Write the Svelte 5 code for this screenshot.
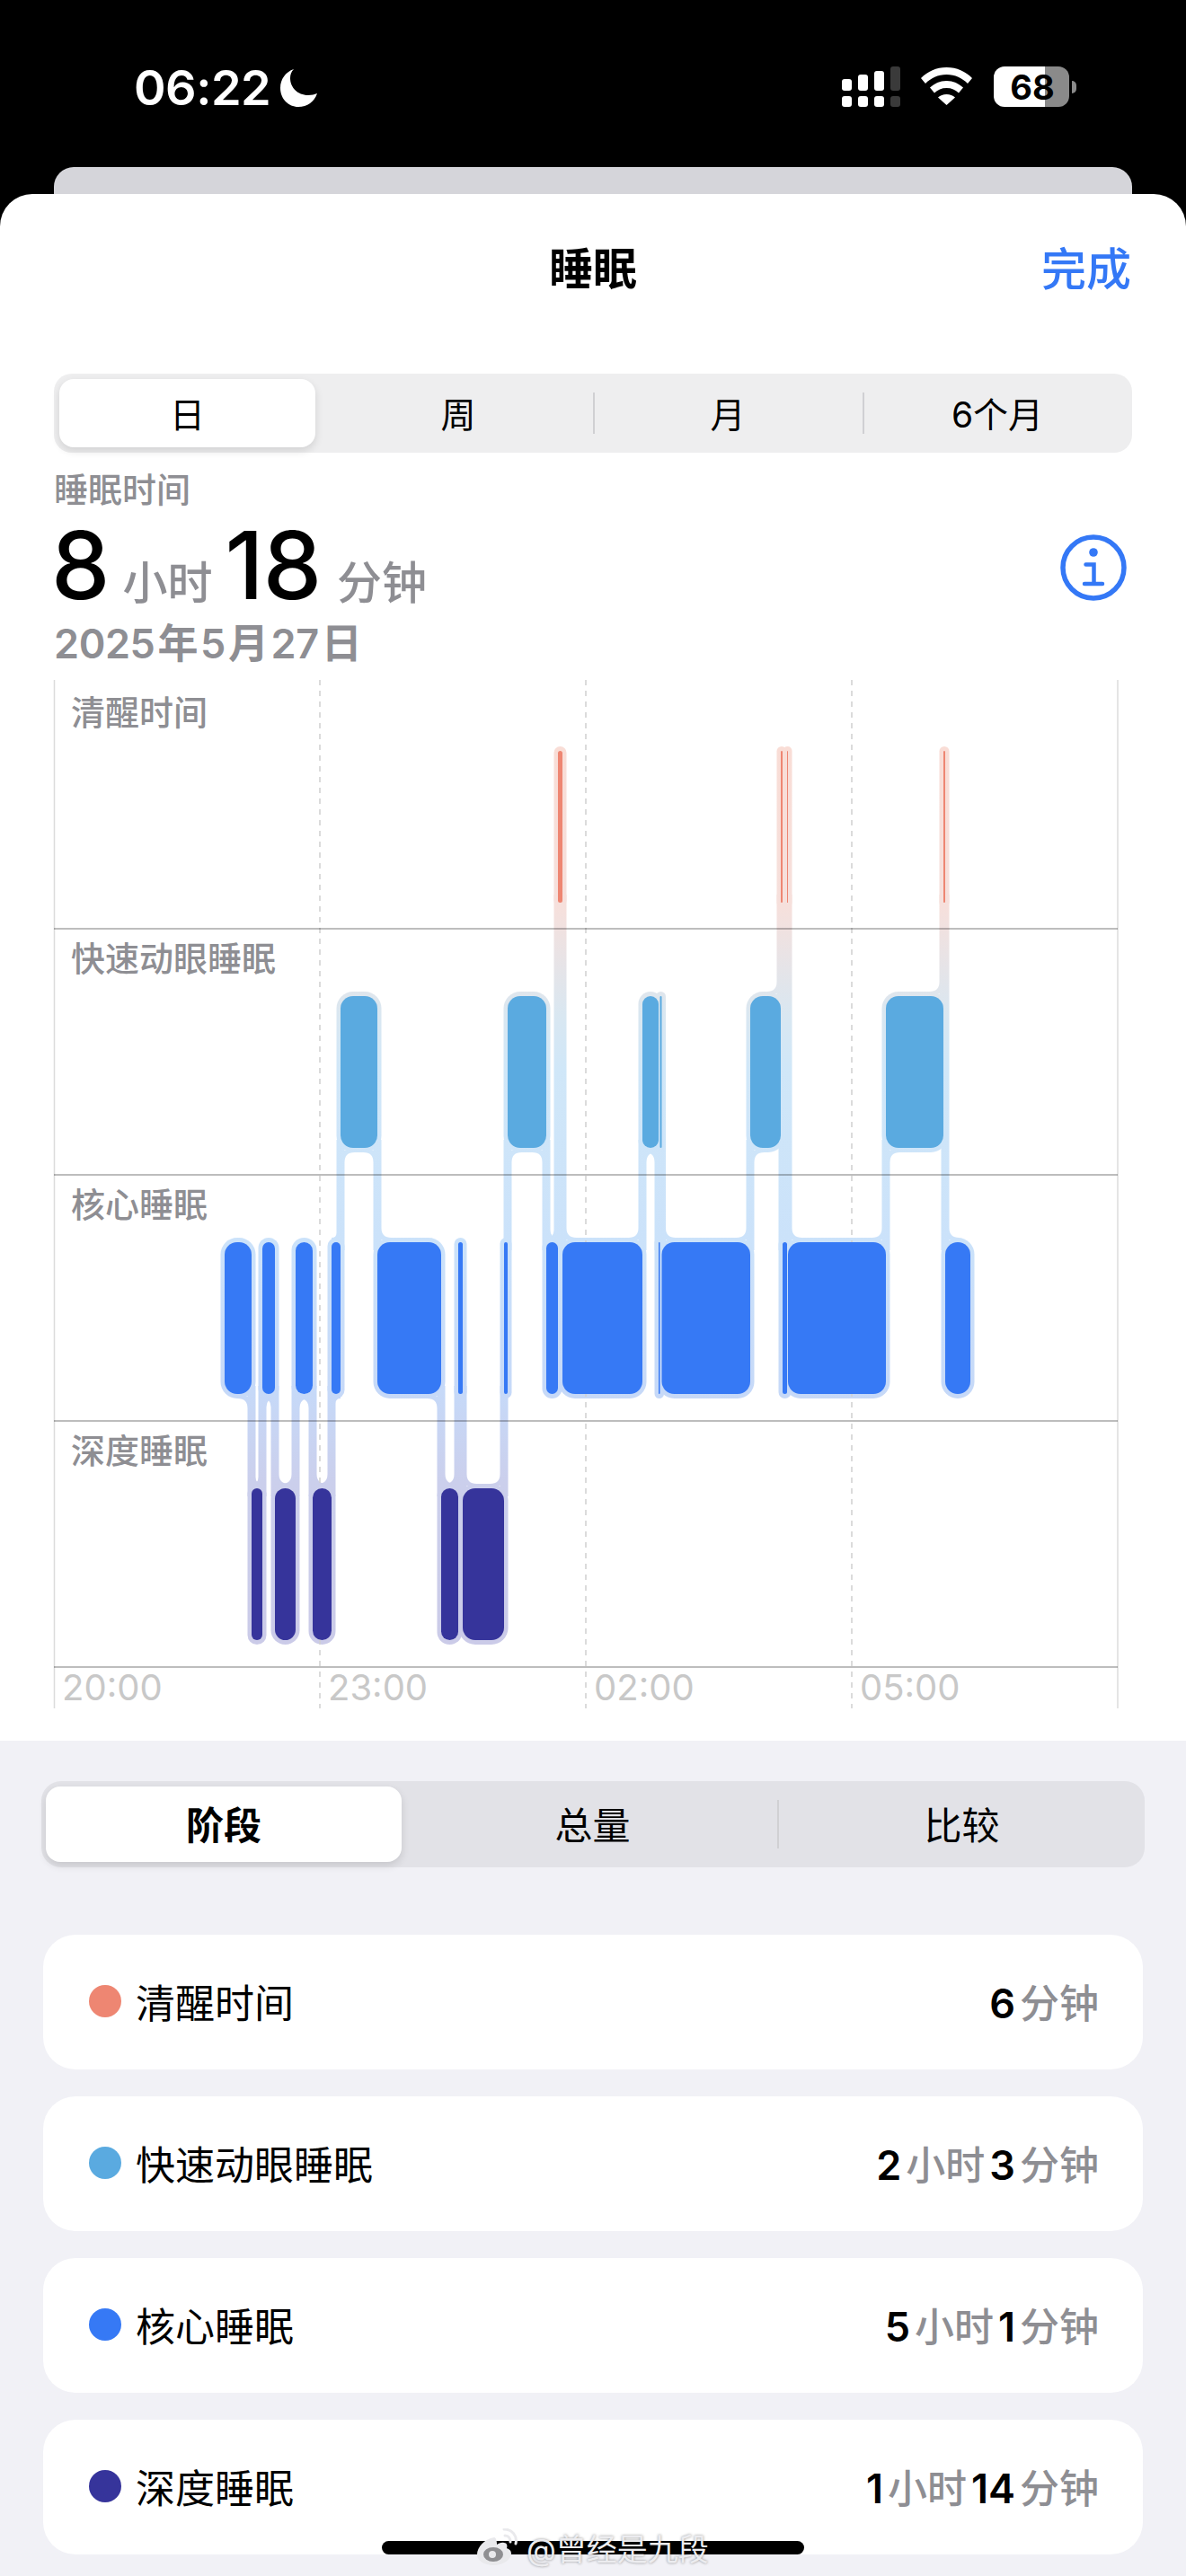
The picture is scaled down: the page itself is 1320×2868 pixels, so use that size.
<script>
	// Timeline of the night, in chart pixels. Neighbouring segments touch.
	const ROWS = { awake: 836, rem: 1109, core: 1383, deep: 1657 }
	const BAR_H = 169
	const FILL = { awake: "#ee8672", rem: "#5aaae0", core: "#3679f5", deep: "#36349b" }

	const segments = [
		["core", 250, 280], ["deep", 280, 292], ["core", 292, 306], ["deep", 306, 329],
		["core", 329, 348], ["deep", 348, 369], ["core", 369, 379], ["rem", 379, 420],
		["core", 420, 491], ["deep", 491, 510], ["core", 510, 515], ["deep", 515, 561],
		["core", 561, 565], ["rem", 565, 608], ["core", 608, 621], ["awake", 621, 626],
		["core", 626, 715], ["rem", 715, 733], ["core", 733, 734.5], ["rem", 734.5, 736.5],
		["core", 736.5, 835], ["rem", 835, 869], ["awake", 869, 871], ["core", 871, 876],
		["awake", 876, 877], ["core", 877, 986], ["rem", 986, 1050], ["awake", 1050, 1052],
		["core", 1052, 1080],
	].map(([stage, x0, x1]) => ({ stage, x: x0, w: x1 - x0, y: ROWS[stage] }))

	const HALO_X = 4.5
	const HALO_Y = 5

	function radius(w) {
		return Math.min(14, w / 2)
	}

	// Connector between two neighbouring segments, with the concave fillets
	function connector(a, b) {
		const x = a.x + a.w
		const up = a.y < b.y ? a : b
		const down = a.y < b.y ? b : a
		const dir = up === a ? -1 : 1
		const yu = up.y + BAR_H + HALO_Y
		const yl = down.y - HALO_Y
		const near = x + dir * HALO_X
		const far = x - dir * HALO_X
		const ru = Math.min(11, Math.max(0, up.w - HALO_X))
		const rl = Math.min(11, Math.max(0, down.w - HALO_X))
		return [
			`M${near + dir * ru} ${yu - 2}`,
			`L${near + dir * ru} ${yu}`,
			`Q${near} ${yu} ${near} ${yu + ru}`,
			`L${near} ${yl + 14}`,
			`L${far} ${yl + 14}`,
			`L${far} ${yl + 2}`,
			`L${far - dir * rl} ${yl + 2}`,
			`L${far - dir * rl} ${yl}`,
			`Q${far} ${yl} ${far} ${yl - rl}`,
			`L${far} ${yu - 14}`,
			`L${near} ${yu - 14}`,
			`L${near} ${yu - 2}`,
			"Z",
		].join("")
	}

	const links = segments.slice(1).map((seg, i) => connector(segments[i], seg))

	const gridY = [1034, 1308, 1582, 1856]
	const gridX = [356, 652, 948]
	const rowLabels = [
		["清醒时间", 807],
		["快速动眼睡眠", 1081],
		["核心睡眠", 1355],
		["深度睡眠", 1629],
	]
	const hours = [["20:00", 69], ["23:00", 365], ["02:00", 661], ["05:00", 957]]

	const ranges = ["日", "周", "月", "6个月"]
	const modes = ["阶段", "总量", "比较"]

	const stages = [
		{ name: "清醒时间", color: FILL.awake, value: [["6", "分钟"]] },
		{ name: "快速动眼睡眠", color: FILL.rem, value: [["2", "小时"], ["3", "分钟"]] },
		{ name: "核心睡眠", color: FILL.core, value: [["5", "小时"], ["1", "分钟"]] },
		{ name: "深度睡眠", color: FILL.deep, value: [["1", "小时"], ["14", "分钟"]] },
	]
</script>

<div class="page">
	<header class="status">
		<div class="clock">
			<span>06:22</span>
			<svg class="moon" viewBox="0 0 41 42" aria-hidden="true">
				<path d="M15 0C6 3 0 11 0 21c0 12 9 21 20 21 10 0 18-6 21-15-3 1-6 2-10 2C19 29 11 20 11 10c0-4 1-7 4-10z" fill="#fff" />
			</svg>
		</div>
		<div class="status-icons">
			<svg class="signal" viewBox="0 0 65 45" aria-hidden="true">
				<g fill="#fff">
					<rect x="0" y="14" width="11" height="13" rx="3" />
					<rect x="18" y="9" width="11" height="18" rx="3" />
					<rect x="36" y="5" width="11" height="22" rx="3" />
					<rect x="0" y="33" width="11" height="12" rx="3" />
					<rect x="18" y="33" width="11" height="12" rx="3" />
					<rect x="36" y="33" width="11" height="12" rx="3" />
				</g>
				<g fill="#3a3a3a">
					<rect x="54" y="0" width="11" height="27" rx="3" />
					<rect x="54" y="33" width="11" height="12" rx="3" />
				</g>
			</svg>
			<svg class="wifi" viewBox="0 0 57 42" aria-hidden="true">
				<path d="M28.500 0C17 0 7.500 4.500 0 12l5 6c6-6 14-10 23.500-10S46 12 52 18l5-6C49.500 4.500 40 0 28.500 0z" fill="#fff" />
				<path d="M28.500 15c-7.500 0-13.500 3-18.500 7.500l5 6c3.500-3.500 8-5.500 13.500-5.500S38.500 25 42 28.500l5-6C42 18 36 15 28.500 15z" fill="#fff" />
				<path d="M28.500 30c-4 0-7 1.500-9.500 3.500L28.500 42 38 33.500C35.500 31.500 32.500 30 28.500 30z" fill="#fff" />
			</svg>
			<div class="battery">
				<div class="battery-body"><span>68</span></div>
				<div class="battery-cap"></div>
			</div>
		</div>
	</header>

	<div class="back-card"></div>

	<main class="sheet">
		<div class="nav">
			<h1>睡眠</h1>
			<span class="done">完成</span>
		</div>

		<div class="segmented ranges">
			{#each ranges as range, i}
				<div class="seg-item" class:active={i === 0} class:divided={i > 1}>{range}</div>
			{/each}
		</div>

		<section class="summary">
			<div class="summary-label">睡眠时间</div>
			<div class="summary-value">
				<b class="first">8</b><span class="unit">小时</span><b>18</b><span class="unit minutes">分钟</span>
				<svg class="info" viewBox="0 0 74 74" aria-hidden="true">
					<circle cx="37" cy="37" r="34" fill="none" stroke="#3478f6" stroke-width="5.500" />
					<circle cx="37" cy="20" r="4.800" fill="#3478f6" />
					<path d="M28.500 33.500H37.500V55M27 55H47" fill="none" stroke="#3478f6" stroke-width="4.500" stroke-linecap="round" />
				</svg>
			</div>
			<div class="summary-date">2025<i>年</i>5<i>月</i>27<i>日</i></div>
		</section>

		<svg class="chart" viewBox="0 757 1320 1145" role="img" aria-label="睡眠阶段图表">
			<defs>
				<linearGradient id="halo" gradientUnits="userSpaceOnUse" x1="0" y1="830" x2="0" y2="1830">
					<stop offset="0" stop-color="#f9ddd6" />
					<stop offset="0.18" stop-color="#f6e0dc" />
					<stop offset="0.3" stop-color="#d9e7f1" />
					<stop offset="0.36" stop-color="#d0e7f8" />
					<stop offset="0.55" stop-color="#cbe2fa" />
					<stop offset="0.72" stop-color="#c6d9f8" />
					<stop offset="0.82" stop-color="#cbcfec" />
					<stop offset="1" stop-color="#cbcbe8" />
				</linearGradient>
			</defs>

			<line class="edge" x1="60.500" y1="757" x2="60.500" y2="1902" />
			<line class="edge" x1="1244" y1="757" x2="1244" y2="1902" />

			{#each rowLabels as [label, y]}
				<text class="row-label" x="79" {y}>{label}</text>
			{/each}

			{#each links as d}
				<path {d} fill="url(#halo)" />
			{/each}
			{#each segments as seg}
				<rect
					x={seg.x - HALO_X}
					y={seg.y - HALO_Y}
					width={seg.w + HALO_X * 2}
					height={BAR_H + HALO_Y * 2}
					rx={radius(seg.w) + HALO_X}
					fill="url(#halo)"
				/>
			{/each}

			{#each gridX as x}
				<line class="dash" x1={x} y1="757" x2={x} y2="1902" />
			{/each}
			{#each gridY as y}
				<line class="rule" x1="60" y1={y} x2="1244" y2={y} />
			{/each}

			{#each segments as seg}
				<rect x={seg.x} y={seg.y} width={seg.w} height={BAR_H} rx={radius(seg.w)} fill={FILL[seg.stage]} />
			{/each}

			{#each hours as [hour, x]}
				<text class="hour" {x} y="1893">{hour}</text>
			{/each}
		</svg>
	</main>

	<section class="lower">
		<div class="segmented modes">
			{#each modes as mode, i}
				<div class="seg-item" class:active={i === 0} class:divided={i > 1}>{mode}</div>
			{/each}
		</div>

		<div class="stage-list">
			{#each stages as stage}
				<div class="stage-card">
					<span class="dot" style="background: {stage.color}"></span>
					<span class="stage-name">{stage.name}</span>
					<span class="stage-value">
						{#each stage.value as [num, unit]}
							<b>{num}</b><span>{unit}</span>
						{/each}
					</span>
				</div>
			{/each}
		</div>
	</section>

	<div class="home-bar"></div>

	<div class="watermark">
		<svg class="weibo" viewBox="0 0 48 42" aria-hidden="true">
			<path d="M20 10C9 12 1 21 1 29c0 7 8 12 18 12 12 0 20-7 20-13 0-4-3-5-5-6 1-3 0-6-3-6-3-1-6 1-8 2 0-4-1-8-3-8z" fill="#e9e9ec" />
			<ellipse cx="19" cy="29" rx="11" ry="8" fill="#8f8f92" />
			<circle cx="18" cy="29" r="4" fill="#e9e9ec" />
			<path d="M31 1c9 0 15 7 13 16M32 8c4 0 6 3 6 7" fill="none" stroke="#e9e9ec" stroke-width="3" stroke-linecap="round" />
		</svg>
		<span>@曾经是九段</span>
	</div>
</div>

<style>
	:global(body) {
		background: #000;
	}

	.page {
		position: relative;
		width: 1320px;
		height: 2868px;
		overflow: hidden;
		background: #000;
		font-family: Inter, "Noto Sans CJK SC", sans-serif;
	}

	.status {
		height: 186px;
		display: flex;
		justify-content: space-between;
		align-items: flex-start;
		padding: 74px 122px 0 149px;
		box-sizing: border-box;
		color: #fff;
	}

	.clock {
		display: flex;
		align-items: center;
		gap: 11px;
		font-size: 54px;
		font-weight: 600;
		line-height: 48px;
		letter-spacing: -0.5px;
	}

	.moon {
		width: 41px;
		height: 42px;
	}

	.status-icons {
		display: flex;
		align-items: flex-start;
		gap: 23px;
	}

	.signal {
		width: 65px;
		height: 45px;
	}

	.wifi {
		width: 57px;
		height: 42px;
		margin-top: 1px;
		margin-right: 1px;
	}

	.battery {
		display: flex;
		align-items: center;
		gap: 3px;
	}

	.battery-body {
		width: 84px;
		height: 45px;
		border-radius: 12px;
		background: linear-gradient(90deg, #fff 0 57px, #8a8a8a 57px);
		color: #000;
		display: flex;
		align-items: center;
		justify-content: center;
		font-size: 38px;
		font-weight: 700;
		padding-left: 2px;
		box-sizing: border-box;
	}

	.battery-cap {
		width: 5px;
		height: 14px;
		border-radius: 0 5px 5px 0;
		background: #8a8a8a;
	}

	.back-card {
		height: 60px;
		margin: 0 60px -30px;
		border-radius: 22px 22px 0 0;
		background: #d5d5da;
	}

	.sheet {
		position: relative;
		height: 1722px;
		border-radius: 36px 36px 0 0;
		background: #fff;
	}

	.nav {
		position: relative;
		height: 200px;
		display: flex;
		justify-content: center;
	}

	.nav h1 {
		margin: 54px 0 0;
		font-size: 49px;
		line-height: 60px;
		font-weight: 600;
		color: #000;
	}

	.done {
		position: absolute;
		right: 61px;
		top: 54px;
		font-size: 50px;
		line-height: 60px;
		font-weight: 500;
		color: #3478f6;
	}

	.segmented {
		display: grid;
		box-sizing: border-box;
		color: #000;
	}

	.ranges {
		height: 88px;
		margin: 0 60px;
		padding: 6px 0;
		grid-template-columns: repeat(4, 1fr);
		border-radius: 20px;
		background: #eeeeef;
		font-size: 39px;
	}

	.ranges .seg-item {
		padding-bottom: 2px;
	}

	.ranges .seg-item.active {
		margin: 0 9px 0 6px;
		font-weight: 400;
	}

	.modes {
		height: 96px;
		margin: 0 46px;
		padding: 6px 5px;
		grid-template-columns: 396px 418px 1fr;
		border-radius: 22px;
		background: #e2e2e7;
		font-size: 42px;
	}

	.modes .seg-item {
		padding-bottom: 3px;
	}

	.modes .seg-item:not(.active) {
		padding-left: 7px;
	}

	.seg-item {
		position: relative;
		display: flex;
		align-items: center;
		justify-content: center;
		border-radius: 16px;
	}

	.seg-item.active {
		background: #fff;
		font-weight: 600;
		box-shadow: 0 4px 10px rgba(0, 0, 0, 0.12);
	}

	.seg-item.divided::before {
		content: "";
		position: absolute;
		left: 0;
		top: 15px;
		bottom: 15px;
		width: 2px;
		background: #d0d0d3;
	}

	.summary {
		margin: 0 60px;
		height: 253px;
		padding-top: 16px;
		box-sizing: border-box;
		color: #8e8e93;
	}

	.summary-label {
		font-size: 38px;
		line-height: 50px;
		font-weight: 500;
	}

	.summary-value {
		position: relative;
		display: flex;
		align-items: baseline;
		height: 118px;
		line-height: 118px;
		font-size: 50px;
		font-weight: 500;
	}

	.summary-value b {
		font-size: 104px;
		font-weight: 500;
		color: #000;
		letter-spacing: -1px;
	}

	.summary-value .first {
		margin-left: -3px;
	}

	.unit {
		margin: 0 14px 0 15px;
	}

	.unit.minutes {
		margin-left: 18px;
	}

	.info {
		position: absolute;
		right: 6px;
		top: 25px;
		width: 74px;
		height: 74px;
	}

	.summary-date {
		font-size: 45px;
		line-height: 58px;
		font-weight: 600;
		letter-spacing: -0.4px;
	}

	.summary-date i {
		font-style: normal;
		margin: 0 3px;
	}

	.chart {
		display: block;
		width: 1320px;
		height: 1145px;
	}

	.edge {
		stroke: #dcdcdc;
		stroke-width: 1.500;
	}

	.dash {
		stroke: #cfcfcf;
		stroke-width: 1.500;
		stroke-dasharray: 6 6;
	}

	.rule {
		stroke: rgba(0, 0, 0, 0.26);
		stroke-width: 2;
	}

	.row-label {
		font-size: 38px;
		font-weight: 500;
		fill: #8e8e93;
	}

	.hour {
		font-size: 40px;
		fill: #c8c8c8;
	}

	.lower {
		height: 930px;
		background: #f1f1f6;
		padding-top: 45px;
		box-sizing: border-box;
	}

	.stage-list {
		margin: 75px 48px 0;
		display: flex;
		flex-direction: column;
		gap: 30px;
	}

	.stage-card {
		height: 150px;
		display: flex;
		align-items: center;
		padding: 0 49px 3px 51px;
		border-radius: 36px;
		background: #fff;
		box-sizing: border-box;
	}

	.dot {
		width: 36px;
		height: 36px;
		border-radius: 50%;
		margin-right: 16px;
	}

	.stage-name {
		flex: 1;
		font-size: 44px;
		color: #000;
	}

	.stage-value {
		display: flex;
		align-items: baseline;
		font-size: 44px;
		font-weight: 500;
		color: #8e8e93;
	}

	.stage-value b {
		font-size: 45px;
		font-weight: 600;
		color: #000;
		margin: 0 5px 0 5px;
	}

	.home-bar {
		position: absolute;
		left: 425px;
		top: 2829px;
		width: 470px;
		height: 15px;
		border-radius: 8px;
		background: #000;
	}

	.watermark {
		position: absolute;
		left: 530px;
		top: 2814px;
		display: flex;
		align-items: center;
		gap: 8px;
		height: 44px;
		font-size: 34px;
		color: #ececef;
		text-shadow: 0 0 3px rgba(0, 0, 0, 0.45);
	}

	.weibo {
		width: 48px;
		height: 42px;
	}
</style>
